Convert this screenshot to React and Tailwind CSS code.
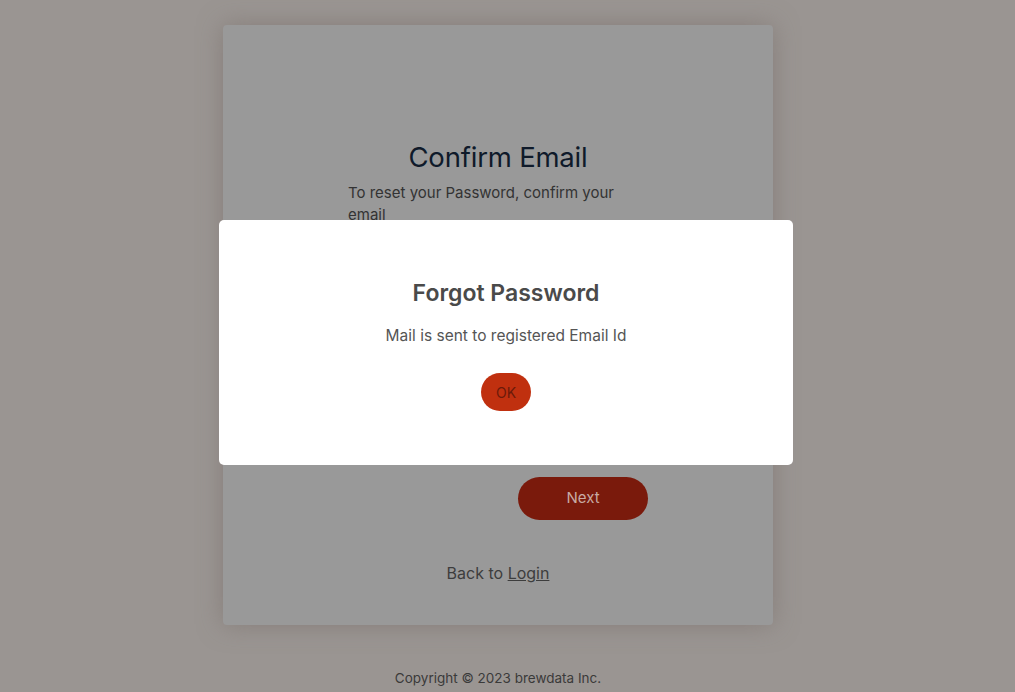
export default function App() {
  const font = { fontFamily: "Inter, 'Noto Sans', sans-serif" };
  return (
    <div className="relative min-h-[692px] w-full bg-[#9a9592] flex flex-col items-center pr-[19px]" style={font}>
      <div className="w-full flex justify-center pt-[25px]">
        <div className="w-[550px] h-[600px] bg-[#999999] rounded-[4px] shadow-[0_0_24px_rgba(120,110,105,0.6)] flex flex-col items-center">
          <h1 className="mt-[115px] text-[27.5px] leading-[34px] text-[#0f1a2a] tracking-[-0.2px]">Confirm Email</h1>
          <div className="w-[300px] mt-[8px]">
            <p className="text-[15px] leading-[22px] text-[#333333] w-[280px]">To reset your Password, confirm your email</p>
          </div>
          <div className="w-[300px] flex justify-end mt-[251px]">
            <button className="w-[130px] h-[43px] rounded-full bg-[#7a1a0c] text-[15px] text-[#c8aaa4]">Next</button>
          </div>
          <p className="mt-[42px] text-[16px] leading-[22px] text-[#3d3d3d]">
            Back to <span className="underline">Login</span>
          </p>
        </div>
      </div>
      <p className="mt-[43px] text-[13.5px] leading-[20px] text-[#3a3a3a]">Copyright © 2023 brewdata Inc.</p>

      <div className="absolute left-[219px] top-[220px] w-[574px] h-[245px] bg-white rounded-[5px] flex flex-col items-center">
        <h2 className="mt-[58px] text-[23px] leading-[30px] font-semibold text-[#4a4a4a]">Forgot Password</h2>
        <p className="mt-[18px] text-[15.5px] leading-[20px] text-[#555555]">Mail is sent to registered Email Id</p>
        <button className="mt-[27px] w-[50px] h-[38px] rounded-full bg-[#c0300f] text-[14px] text-[#6b1a0a]">OK</button>
      </div>
    </div>
  );
}
